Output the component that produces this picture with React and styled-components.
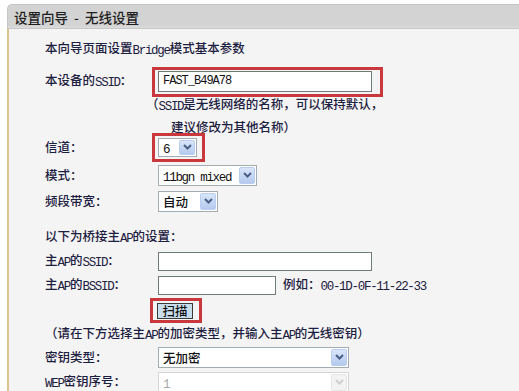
import React from 'react'
import styled, { createGlobalStyle } from 'styled-components'

const GlobalStyle = createGlobalStyle`
  html, body {
    margin: 0;
    padding: 0;
    background: #fff;
  }
  body {
    font-family: "Noto Sans CJK SC", sans-serif;
    font-size: 12.5px;
    font-weight: 500;
    color: #1c2040;
    overflow: hidden;
    text-spacing-trim: space-all;
  }
  * {
    box-sizing: border-box;
  }
`

const Frame = styled.div`
  margin: 4px 0 0 7px;
  height: 387px;
  display: flex;
  flex-direction: column;
`

const Header = styled.div`
  height: 25px;
  flex-shrink: 0;
  background: linear-gradient(#d3d3d3, #d3d3d3 21px, #dedede 22px, #d7d7d7);
  border: 1px solid #c6c6c6;
  border-right: none;
  border-radius: 5px 0 0 0;
  padding-left: 6px;
  display: flex;
  align-items: center;
  font-size: 13.5px;
  color: #1e1e1e;
  white-space: pre;
  word-spacing: 3px;
`

const Body = styled.div`
  flex: 1;
  background: #f4f4f4;
  border-left: 2px solid #dcc28c;
  padding-left: 36px;
`

const Row = styled.div`
  height: ${p => p.$h}px;
  padding-top: ${p => p.$pt || 0}px;
  display: flex;
  align-items: center;
  white-space: nowrap;
`

const Text = styled.div`
  line-height: 18px;
`

const Label = styled.div`
  width: 113px;
  flex-shrink: 0;
  line-height: 18px;
`

const Latin = styled.span`
  font-family: "Liberation Mono", monospace;
  font-size: 12.5px;
  font-weight: 400;
  letter-spacing: -1.3px;
  vertical-align: -1px;
`

const Paren = styled.span`
  display: inline-block;
  width: 12.5px;
  text-align: right;
`

const Note = styled.div`
  height: 38px;
  line-height: 19px;
  white-space: nowrap;
`

const NoteLine = styled.div`
  padding-left: ${p => p.$indent}px;
`

const Highlight = styled.div`
  display: inline-flex;
  border: 3px solid #c8383c;
  padding: ${p => p.$pad};
  margin-left: ${p => p.$ml}px;
`

const Input = styled.input`
  width: ${p => p.$w}px;
  height: ${p => p.$h}px;
  border: 1px solid #6f7a74;
  background: #fff;
  padding: 0 0 0 4px;
  margin: 0;
  outline: none;
  font-family: "Liberation Mono", monospace;
  font-size: 12px;
  letter-spacing: -1px;
  color: #111;
`

const Select = styled.div`
  width: ${p => p.$w}px;
  height: ${p => p.$h}px;
  border: 1px solid ${p => (p.$disabled ? '#d3d6da' : '#a3abb3')};
  background: #fff;
  display: flex;
  align-items: center;
  justify-content: space-between;
  padding: 1px 1px 1px 4px;
  color: ${p => (p.$disabled ? '#a8a8a8' : '#111')};
`

const ArrowBox = styled.span`
  width: 16px;
  height: 100%;
  border: 1px solid ${p => (p.$disabled ? '#e6e6e6' : '#b9cdf0')};
  border-radius: 2px;
  background: ${p =>
    p.$disabled ? '#f3f3f3' : 'linear-gradient(#d9e5f9, #b5caef)'};
  display: flex;
  align-items: center;
  justify-content: center;
`

const ScanButton = styled.button`
  width: 36px;
  height: 16px;
  margin: 0;
  padding: 0;
  border: 1px solid #3a3a3a;
  background: #c9deec;
  font-family: inherit;
  font-size: 12.5px;
  font-weight: 500;
  line-height: 14px;
  color: #111;
`

const Example = styled.div`
  margin-left: 7px;
  line-height: 18px;
`

const Arrow = ({ disabled }) => (
  <ArrowBox $disabled={disabled}>
    <svg width="9" height="6" viewBox="0 0 9 6">
      <polyline
        points="1,1 4.5,4.5 8,1"
        fill="none"
        stroke={disabled ? '#cfcfcf' : '#4a5f86'}
        strokeWidth="2"
      />
    </svg>
  </ArrowBox>
)

const Dropdown = ({ w, h = 21, disabled, children }) => (
  <Select $w={w} $h={h} $disabled={disabled}>
    <span>{children}</span>
    <Arrow disabled={disabled} />
  </Select>
)

export default function App() {
  return (
    <>
      <GlobalStyle />
      <Frame>
        <Header>设置向导 - 无线设置</Header>
        <Body>
          <Row $h={40}>
            <Text>本向导页面设置<Latin>Bridge</Latin>模式基本参数</Text>
          </Row>
          <Row $h={25}>
            <Label>本设备的<Latin>SSID</Latin>：</Label>
            <Highlight $ml={-6} $pad="1px 8px 2px 3px">
              <Input $w={214} $h={21} readOnly value="FAST_B49A78" />
            </Highlight>
          </Row>
          <Note>
            <NoteLine $indent={101}>
              <Paren>（</Paren><Latin>SSID</Latin>是无线网络的名称，可以保持默认，
            </NoteLine>
            <NoteLine $indent={126}>建议修改为其他名称）</NoteLine>
          </Note>
          <Row $h={30}>
            <Label>信道：</Label>
            <Highlight $ml={-6} $pad="2px 5px 2px 3px">
              <Dropdown w={39} h={19}>
                <Latin>6</Latin>
              </Dropdown>
            </Highlight>
          </Row>
          <Row $h={26}>
            <Label>模式：</Label>
            <Dropdown w={99}>
              <Latin>11bgn mixed</Latin>
            </Dropdown>
          </Row>
          <Row $h={26}>
            <Label>频段带宽：</Label>
            <Dropdown w={60}>自动</Dropdown>
          </Row>
          <Row $h={35} $pt={11}>
            <Text>以下为桥接主<Latin>AP</Latin>的设置：</Text>
          </Row>
          <Row $h={24}>
            <Label>主<Latin>AP</Latin>的<Latin>SSID</Latin>：</Label>
            <Input $w={214} $h={19} readOnly value="" />
          </Row>
          <Row $h={24}>
            <Label>主<Latin>AP</Latin>的<Latin>BSSID</Latin>：</Label>
            <Input $w={118} $h={19} readOnly value="" />
            <Example>
              例如：<Latin>00-1D-0F-11-22-33</Latin>
            </Example>
          </Row>
          <Row $h={26}>
            <Label />
            <Highlight $ml={-8} $pad="2px 6px 1px 4px">
              <ScanButton type="button">扫描</ScanButton>
            </Highlight>
          </Row>
          <Row $h={22}>
            <Text>
              <Paren>（</Paren>请在下方选择主<Latin>AP</Latin>的加密类型，并输入主<Latin>AP</Latin>的无线密钥）
            </Text>
          </Row>
          <Row $h={24}>
            <Label>密钥类型：</Label>
            <Dropdown w={191}>无加密</Dropdown>
          </Row>
          <Row $h={26}>
            <Label><Latin>WEP</Latin>密钥序号：</Label>
            <Dropdown w={191} disabled>
              <Latin>1</Latin>
            </Dropdown>
          </Row>
        </Body>
      </Frame>
    </>
  )
}
